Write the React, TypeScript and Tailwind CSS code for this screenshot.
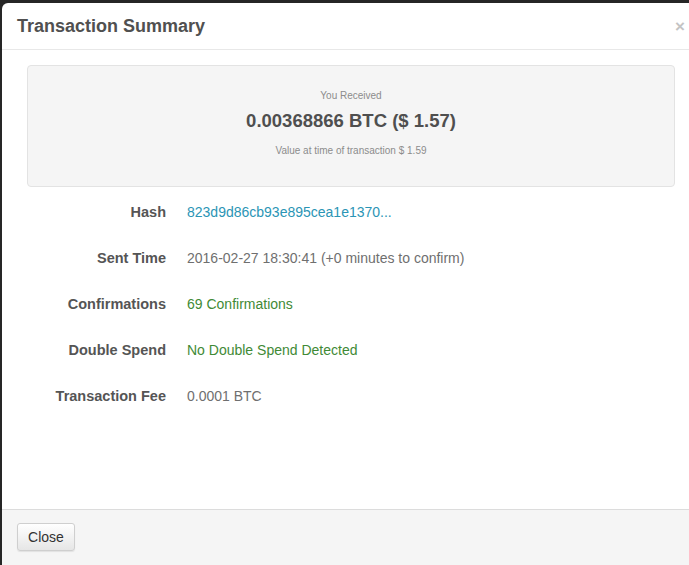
import React from 'react';

const rows: { label: string; value: React.ReactNode }[] = [
  { label: 'Hash', value: <span className="text-[#2b95b5]">823d9d86cb93e895cea1e1370...</span> },
  { label: 'Sent Time', value: <span className="text-[#6f6f6f]">2016-02-27 18:30:41 (+0 minutes to confirm)</span> },
  { label: 'Confirmations', value: <span className="text-[#3f8a36]">69 Confirmations</span> },
  { label: 'Double Spend', value: <span className="text-[#3f8a36]">No Double Spend Detected</span> },
  { label: 'Transaction Fee', value: <span className="text-[#6f6f6f]">0.0001 BTC</span> },
];

const App: React.FC = () => {
  return (
    <div
      className="w-[689px] h-[565px] overflow-hidden bg-[#262626] pt-[3px] pl-[2px]"
      style={{ fontFamily: '"Liberation Sans", Arial, sans-serif' }}
    >
      <div className="w-[698px] h-[562px] bg-white rounded-tl-[6px] flex flex-col">
        {/* Header */}
        <div className="h-[47px] shrink-0 flex items-center justify-between pl-[15px] pr-[15px] border-b border-[#e8e8e8]">
          <h3 className="text-[18px] font-bold text-[#505050] leading-none">Transaction Summary</h3>
          <span className="text-[17px] text-[#c4c4c4] leading-none font-bold">×</span>
        </div>

        {/* Body */}
        <div className="flex-1 px-[25px] pt-[15px]">
          <div className="h-[122px] bg-[#f5f5f5] border border-[#e3e3e3] rounded-[4px] flex flex-col items-center pt-[23px]">
            <div className="text-[10px] text-[#8c8c8c] leading-[14px]">You Received</div>
            <div className="text-[18.5px] font-bold text-[#4f4f4f] leading-[22px] mt-[7px]">0.00368866 BTC ($ 1.57)</div>
            <div className="text-[10px] text-[#8c8c8c] leading-[14px] mt-[12px]">Value at time of transaction $ 1.59</div>
          </div>

          <div className="flex flex-col mt-[2px]">
            {rows.map((r) => (
              <div key={r.label} className="h-[46px] flex items-baseline pt-[13px] gap-[21px] text-[14px] leading-[20px]">
                <div className="w-[139px] text-right font-bold text-[#555555] text-[14.5px]">{r.label}</div>
                <div>{r.value}</div>
              </div>
            ))}
          </div>
        </div>

        {/* Footer */}
        <div className="h-[56px] shrink-0 bg-[#f5f5f5] border-t border-[#dcdcdc] pl-[15px] pt-[13px]">
          <button className="w-[58px] h-[28px] rounded-[3px] border border-[#cfcfcf] bg-gradient-to-b from-white to-[#e6e6e6] text-[14px] text-[#333] shadow-[0_1px_1px_rgba(0,0,0,0.08)]">
            Close
          </button>
        </div>
      </div>
    </div>
  );
};

export default App;
